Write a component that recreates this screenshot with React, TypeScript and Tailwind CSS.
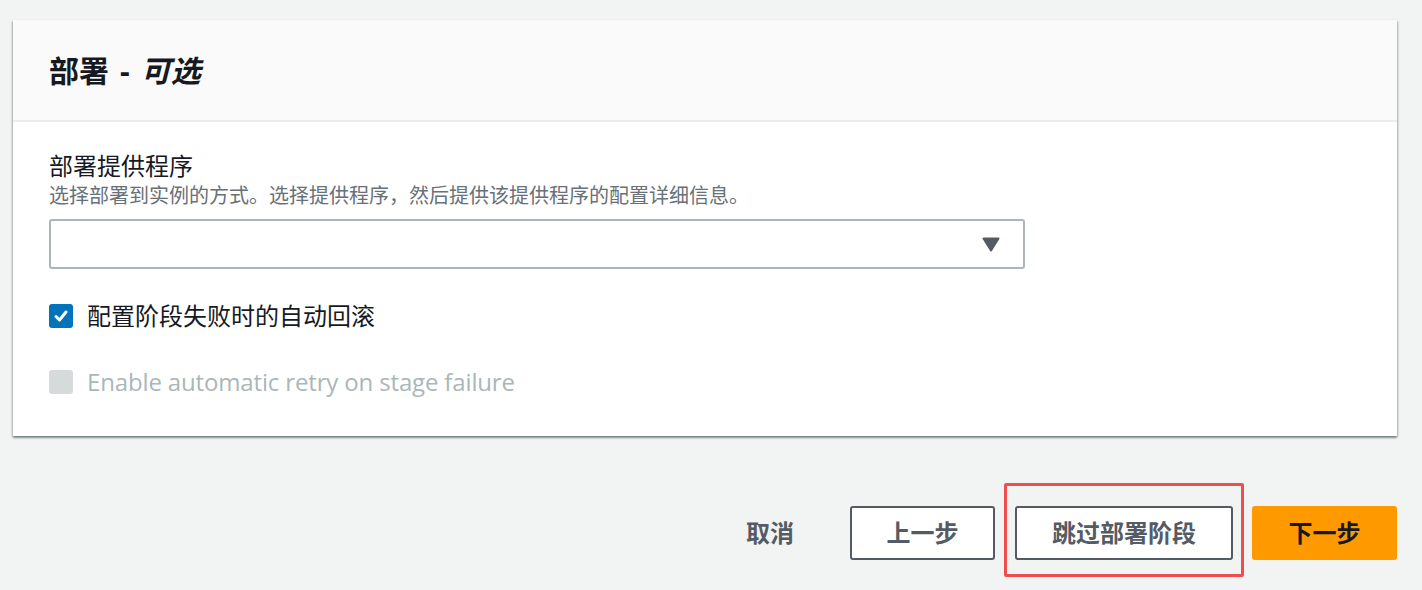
import React from "react";

const font = { fontFamily: '"Open Sans", "Noto Sans CJK SC", sans-serif' };

export default function App() {
  return (
    <div
      className="w-[1422px] h-[590px] bg-[#f2f3f3] pl-[13px] pr-[25px] pt-[20px] overflow-hidden"
      style={font}
    >
      <div className="bg-white shadow-[0_2px_2px_0_rgba(0,28,36,0.35),1px_1px_2px_0_rgba(0,28,36,0.2),-1px_1px_2px_0_rgba(0,28,36,0.2)]">
        <div className="h-[102px] bg-[#fafafa] border-b-2 border-[#eaeded] flex items-center pl-[36px]">
          <h2 className="text-[30px] font-bold text-[#16191f] leading-[36px] pt-[2px]">
            部署<span className="mx-[11px]">-</span><span className="italic">可选</span>
          </h2>
        </div>
        <div className="pl-[36px] pt-[28px] pb-[38px]">
          <div className="text-[24px] leading-[32px] text-[#16191f]">部署提供程序</div>
          <div className="text-[20px] leading-[28px] text-[#687078]">
            选择部署到实例的方式。选择提供程序，然后提供该提供程序的配置详细信息。
          </div>
          <div className="mt-[9px] w-[976px] h-[50px] border-2 border-[#aab7b8] rounded-[3px] flex items-center justify-end pr-[23px]">
            <svg width="18" height="15" viewBox="0 0 18 15">
              <path d="M1.5 1.5 L16.5 1.5 L9 13.5 Z" fill="#545b64" stroke="#545b64" strokeWidth="2" strokeLinejoin="round" />
            </svg>
          </div>
          <div className="mt-[31px] flex items-center h-[32px]">
            <div className="w-[24px] h-[24px] rounded-[3px] bg-[#0073bb] flex items-center justify-center">
              <svg width="16" height="16" viewBox="0 0 16 16">
                <path d="M3 8.5 L6.5 12 L13 4" fill="none" stroke="white" strokeWidth="3" strokeLinecap="round" strokeLinejoin="round" />
              </svg>
            </div>
            <span className="ml-[14px] text-[24px] leading-[32px] text-[#16191f]">配置阶段失败时的自动回滚</span>
          </div>
          <div className="mt-[34px] flex items-center h-[32px]">
            <div className="w-[24px] h-[24px] rounded-[3px] bg-[#d5dbdb]" />
            <span className="ml-[14px] text-[24px] leading-[32px] text-[#aab7b8] tracking-[-0.15px]">
              Enable automatic retry on stage failure
            </span>
          </div>
        </div>
      </div>
      <div className="mt-[70px] flex justify-end items-center">
        <button className="h-[54px] px-[36px] text-[24px] font-bold text-[#545b64]">取消</button>
        <button className="ml-[20px] h-[54px] w-[145px] border-2 border-[#545b64] rounded-[3px] bg-white text-[24px] font-bold text-[#545b64]">
          上一步
        </button>
        <div className="relative ml-[20px]">
          <button className="h-[54px] w-[218px] border-2 border-[#545b64] rounded-[3px] bg-white text-[24px] font-bold text-[#545b64]">
            跳过部署阶段
          </button>
          <div className="absolute left-[-11px] right-[-11px] top-[-23px] bottom-[-17px] border-[3px] border-[#f04e4e] rounded-[2px] pointer-events-none" />
        </div>
        <button className="ml-[19px] h-[54px] w-[145px] rounded-[3px] bg-[#ff9900] text-[24px] font-bold text-[#16191f]">
          下一步
        </button>
      </div>
    </div>
  );
}
